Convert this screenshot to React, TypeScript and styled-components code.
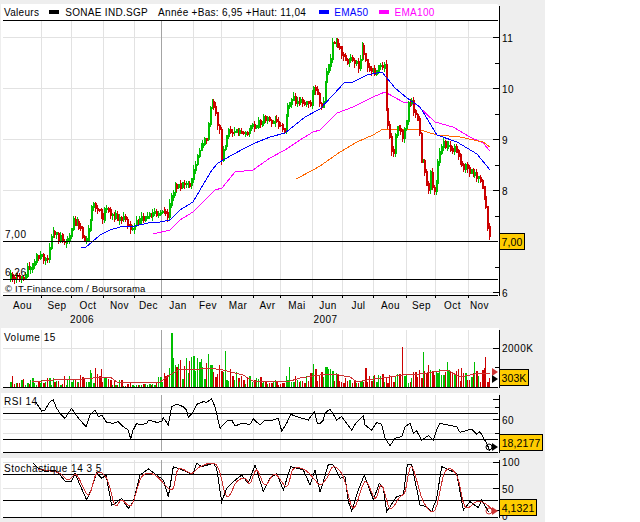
import React from "react";
import styled, { createGlobalStyle } from "styled-components";

type Pt = [number, number];

const GlobalStyle = createGlobalStyle`
  html, body { margin: 0; padding: 0; background: #fff; }
`;

const GREEN = "#00BE00";
const RED = "#CC0000";
const FONT = `"Liberation Sans", Arial, sans-serif`;

const Page = styled.div`
  width: 640px;
  height: 522px;
  background: #fff;
  overflow: hidden;
  font-family: ${FONT};
  font-size: 10px;
  color: #000;
`;
const ChartColumn = styled.div`
  width: 544px;
  height: 518px;
  padding: 4px 0 0 1px;
  background: #eee;
  display: flex;
  flex-direction: column;
`;
const PanelRow = styled.div<{ $h: number; $gap?: number }>`
  display: flex;
  height: ${(p) => p.$h}px;
  margin-bottom: ${(p) => p.$gap ?? 0}px;
  flex: none;
`;
const Plot = styled.div<{ $rounded?: boolean }>`
  width: 498px;
  background: #fff;
  display: flex;
  flex-direction: column;
  border-top-right-radius: ${(p) => (p.$rounded ? 3 : 0)}px;
`;
const Legend = styled.div`
  height: 16px;
  margin-left: 2px;
  width: 494px;
  padding-left: 1px;
  display: flex;
  align-items: center;
  border-bottom: 1px solid #000;
  flex: none;
`;
const LegendText = styled.span<{ $color?: string; $left?: number }>`
  color: ${(p) => p.$color ?? "#000"};
  margin-left: ${(p) => p.$left ?? 0}px;
  font-size: 10px;
  letter-spacing: 0.3px;
  white-space: pre;
`;
const Swatch = styled.i<{ $color: string; $left: number }>`
  display: block;
  width: 10px;
  height: 4px;
  background: ${(p) => p.$color};
  margin-left: ${(p) => p.$left}px;
`;
const PlotSvg = styled.svg`
  display: block;
  flex: none;
  overflow: visible;
`;
const AxisColumn = styled.div`
  position: relative;
  width: 45px;
  flex: none;
`;
const AxisSvg = styled.svg`
  display: block;
  overflow: visible;
`;
const Badge = styled.div<{ $top: number; $width: number; $height: number }>`
  position: absolute;
  left: 0;
  top: ${(p) => p.$top}px;
  width: ${(p) => p.$width}px;
  height: ${(p) => p.$height}px;
  box-sizing: border-box;
  background: #ffcc00;
  border: 1px solid #000;
  display: flex;
  align-items: center;
  justify-content: center;
  font-size: 10.5px;
  letter-spacing: 0.1px;
  white-space: nowrap;
`;
const TimeAxis = styled.div`
  height: 32px;
  flex: none;
  padding-left: 2px;
`;
const TimeRow = styled.div<{ $h: number }>`
  display: flex;
  height: ${(p) => p.$h}px;
  align-items: center;
`;
const TimeCell = styled.span<{ $w: number }>`
  width: ${(p) => p.$w}px;
  flex: none;
  text-align: center;
  letter-spacing: 0.4px;
`;
const ChartLabel = styled.text<{ $tight?: boolean }>`
  font-family: ${FONT};
  font-size: ${(p) => (p.$tight ? 9.5 : 10)}px;
  letter-spacing: ${(p) => (p.$tight ? 0.2 : 0.5)}px;
  fill: #000;
`;

function lerp(p: Pt[], x: number) {
  if (x <= p[0][0]) return p[0][1];
  for (let i = 1; i < p.length; i++) {
    if (x <= p[i][0]) {
      const [a, b] = p[i - 1];
      const [c, d] = p[i];
      return b + ((d - b) * (x - a)) / (c - a || 1);
    }
  }
  return p[p.length - 1][1];
}
function rng(seed: number) {
  let s = seed;
  return () => {
    s = (s * 16807) % 2147483647;
    return (s - 1) / 2147483646;
  };
}
function smooth(p: Pt[], n = 4): Pt[] {
  const out: Pt[] = [];
  for (let i = 0; i < p.length - 1; i++) {
    const a = p[Math.max(i - 1, 0)];
    const b = p[i];
    const c = p[i + 1];
    const d = p[Math.min(i + 2, p.length - 1)];
    for (let k = 0; k < n; k++) {
      const t = k / n;
      const f = (u: number) =>
        0.5 *
        (2 * b[u] +
          (c[u] - a[u]) * t +
          (2 * a[u] - 5 * b[u] + 4 * c[u] - d[u]) * t * t +
          (3 * b[u] - a[u] - 3 * c[u] + d[u]) * t * t * t);
      out.push([f(0), f(1)]);
    }
  }
  out.push(p[p.length - 1]);
  return out;
}
const str = (p: Pt[]) => p.map(([x, y]) => `${x},${y}`).join(" ");
const z = (list: Pt[], xo: number, yo: number): Pt[] => list.map(([x, y]) => [xo + x / 3, yo + y / 3]);

const VGRID = [41.5, 71.5, 103.5, 134.5, 193.5, 221.5, 253.5, 280.5, 312.5, 342.5, 373.5, 406.5, 435.5, 468.5];
const TICKS = [...VGRID, 161.5];
const MONTHS: [string, number][] = [
  ["Aou", 39], ["Sep", 30], ["Oct", 32], ["Nov", 31], ["Dec", 27], ["Jan", 32], ["Fev", 28], ["Mar", 32],
  ["Avr", 27], ["Mai", 32], ["Jun", 30], ["Jul", 31], ["Aou", 33], ["Sep", 29], ["Oct", 33], ["Nov", 21],
];

const CLOSE: Pt[] = [
  [10, 277], [24, 278], [26, 267], [33, 265], [36, 256], [47, 258], [49, 247], [52, 233], [62, 240], [66, 240],
  [70, 235], [72, 220], [78, 224], [83, 238], [87, 236], [90, 213], [93, 203], [100, 212], [102, 217], [105, 207],
  [110, 214], [120, 218], [125, 220], [130, 228], [135, 222], [140, 220], [148, 214], [160, 214], [163, 212],
  [168, 216], [170, 198], [175, 184], [185, 184], [190, 188], [193, 170], [195, 163], [200, 148], [207, 135],
  [210, 108], [212, 102], [215, 115], [219, 130], [221, 160], [224, 145], [228, 130], [235, 128], [245, 133],
  [255, 125], [262, 120], [270, 120], [275, 120], [283, 132], [288, 100], [296, 100], [303, 102], [310, 105],
  [314, 82], [318, 100], [322, 105], [325, 75], [330, 60], [332, 42], [336, 40], [340, 50], [345, 62], [350, 55],
  [354, 60], [358, 68], [362, 45], [365, 60], [370, 68], [374, 74], [379, 62], [384, 68], [385, 90], [385.5, 108],
  [388, 130], [390, 136], [392, 158], [395, 135], [397, 128], [402, 135], [405, 125], [407, 110], [408, 100],
  [411, 100], [414, 110], [418, 120], [419, 135], [420, 168], [422, 155], [424, 165], [427, 193], [430, 175],
  [433, 197], [435, 185], [437, 165], [438, 155], [440, 146], [443, 143], [450, 150], [455, 148], [458, 160],
  [462, 165], [470, 170], [475, 175], [478, 175], [482, 188], [484, 200], [486, 213], [488, 230], [490, 242],
];
const EMA50: Pt[] = [
  [81, 248], [86, 247], [92, 242], [100, 235], [110, 230], [120, 227], [135, 226], [148, 223], [160, 222], [170, 220],
  [180, 210], [193, 202], [200, 190], [212, 170], [218, 163], [232, 155], [245, 148], [255, 143], [270, 137],
  [285, 133], [295, 125], [305, 117], [318, 110], [320, 109], [333, 95], [345, 82], [353, 82], [367, 75], [382, 72],
  [395, 88], [407, 98], [420, 107], [437, 135], [457, 142], [477, 154], [490, 170],
];
const EMA100: Pt[] = [
  [153, 234], [170, 230], [180, 220], [193, 212], [205, 200], [215, 190], [222, 188], [235, 172], [253, 170],
  [270, 158], [285, 150], [300, 140], [313, 132], [320, 130], [337, 113], [353, 107], [373, 97], [385, 92],
  [403, 102], [417, 105], [435, 122], [453, 127], [470, 137], [483, 143], [490, 151],
];
const ORANGE: Pt[] = [
  [296, 179], [313, 170], [320, 166], [340, 152], [357, 142], [373, 135], [383, 129], [417, 129], [437, 135],
  [460, 137], [483, 142], [490, 147],
];
const VOL_MA: Pt[] = [
  [32, 382], [53, 380], [83, 379], [103, 377], [110, 377], [117, 382], [147, 382], [160, 382], [170, 375], [180, 369],
  [193, 370], [208, 368], [223, 370], [243, 375], [253, 381], [287, 382], [300, 378], [320, 375], [333, 374], [350, 377],
  [357, 382], [367, 380], [382, 378], [403, 375], [420, 374], [447, 370], [460, 377], [480, 373], [490, 373],
];
const RSI: Pt[] = [
  ...z([[108, 232], [125, 258], [135, 255], [150, 230], [160, 225], [170, 250], [180, 265], [195, 280], [215, 250], [225, 265], [240, 285], [258, 305], [270, 270], [285, 255], [295, 275], [305, 270], [320, 292], [340, 295], [355, 290], [370, 305], [385, 315], [392, 342], [398, 318], [410, 295], [420, 300], [440, 295], [445, 285], [470, 292], [485, 290], [490, 278], [505, 300], [515, 245], [530, 238], [550, 245], [560, 255], [565, 278], [578, 262], [590, 238], [610, 230], [620, 232], [635, 222], [645, 245], [660, 310], [680, 288], [695, 285], [705, 303], [725, 295], [750, 298], [760, 282], [780, 300], [795, 285], [820, 285], [835, 280], [845, 318], [860, 295], [872, 268], [900, 278], [925, 285], [943, 260], [952, 295]], 0, 325),
  ...z([[0, 295], [10, 285], [15, 265], [30, 252], [50, 285], [65, 275], [95, 315], [105, 298], [130, 272], [135, 300], [155, 315], [170, 293], [185, 298], [195, 340], [210, 362], [225, 340], [245, 335], [255, 305], [270, 295], [280, 325], [290, 318], [305, 345], [325, 332], [340, 345], [350, 315], [360, 295], [410, 305], [420, 322], [455, 312], [470, 328], [480, 320], [500, 355], [510, 378]], 320, 325),
];
const STO_K: Pt[] = [
  ...z([[100, 415], [115, 430], [135, 440], [165, 435], [180, 450], [197, 470], [215, 468], [225, 445], [240, 480], [260, 525], [275, 490], [290, 445], [305, 460], [318, 450], [335, 540], [345, 535], [365, 520], [385, 550], [400, 530], [420, 450], [445, 432], [470, 450], [490, 465], [505, 515], [520, 425], [535, 430], [560, 440], [578, 450], [590, 415], [605, 425], [640, 415], [650, 430], [665, 530], [680, 490], [700, 470], [725, 450], [745, 475], [765, 420], [790, 500], [810, 460], [830, 445], [850, 495], [872, 425], [910, 435], [930, 480], [945, 435]], 0, 325),
  ...z([[0, 500], [10, 470], [25, 418], [40, 420], [60, 460], [75, 455], [85, 530], [95, 558], [115, 495], [133, 450], [160, 525], [178, 475], [190, 490], [200, 560], [230, 515], [250, 510], [262, 420], [275, 418], [300, 540], [320, 545], [335, 560], [350, 520], [365, 425], [410, 445], [430, 555], [450, 530], [475, 548], [485, 525], [505, 560]], 320, 325),
];
const STO_D: Pt[] = smooth([
  ...z([[115, 432], [150, 438], [180, 445], [205, 465], [230, 450], [265, 510], [290, 445], [320, 460], [345, 540], [365, 525], [395, 540], [425, 455], [465, 450], [515, 495], [535, 432], [575, 445], [600, 425], [650, 420], [680, 515], [710, 470], [735, 460], [750, 475], [770, 435], [795, 480], [825, 447], [860, 485], [880, 432], [915, 435], [945, 465]], 0, 325),
  ...z([[0, 480], [20, 460], [40, 425], [70, 455], [100, 550], [135, 470], [165, 520], [185, 480], [210, 550], [240, 515], [255, 500], [275, 425], [310, 530], [345, 555], [375, 440], [410, 450], [435, 545], [470, 530], [495, 535], [520, 558]], 320, 325),
], 5);

type Bar = { x: number; hi: number; lo: number; top: number; bottom: number; up: boolean; vol: number; wide: boolean };
const VOL_BASE: Pt[] = [
  [10, 5], [60, 6], [80, 9], [100, 11], [110, 5], [135, 3], [150, 4], [165, 9], [175, 18], [190, 18], [215, 16], [225, 13],
  [240, 7], [275, 5], [300, 8], [320, 13], [340, 8], [355, 5], [400, 10], [480, 12], [490, 12],
];
const VOL_PEAKS: Pt[] = [
  [11, 11], [90, 17], [95, 19], [100, 18], [171, 54], [173, 29], [175, 22], [194, 31], [197, 29], [200, 28], [208, 33], [224, 36],
  [289, 20], [313, 23], [326, 20], [330, 18], [366, 19], [403, 40], [423, 35], [429, 22], [447, 25], [462, 19], [475, 25], [486, 30],
];
const BARS: Bar[] = (() => {
  const r = rng(4711);
  const out: Bar[] = [];
  let prev = CLOSE[0][1];
  let i = 0;
  for (let x = 10; x <= 490; x += 1.85) {
    const close = lerp(CLOSE, x) + (r() - 0.5) * 7;
    const up = close < prev;
    const top = Math.min(close, prev) - r();
    const bottom = Math.max(close, prev) + 1 + r();
    const hi = top - r() * 4;
    const lo = bottom + r() * 4;
    let vol = lerp(VOL_BASE, x) * (0.3 + r() * 1.4);
    const peak = VOL_PEAKS.find(([px]) => Math.abs(px - x) < 0.93);
    if (peak) vol = peak[1];
    out.push({ x: Math.round(x), hi, lo, top, bottom, up, vol, wide: i % 3 === 0 });
    prev = close;
    i++;
  }
  return out;
})();

const HLine = ({ y, x1 = 3, x2 = 498, color = "#000" }: { y: number; x1?: number; x2?: number; color?: string }) => (
  <line x1={x1} x2={x2} y1={y} y2={y} stroke={color} shapeRendering="crispEdges" />
);
const Series = ({ points, color }: { points: Pt[]; color: string }) => (
  <polyline points={str(points)} fill="none" stroke={color} shapeRendering="crispEdges" />
);
const Grid = ({ top, bottom, rows }: { top: number; bottom: number; rows: number[] }) => (
  <>
    {rows.map((y) => (
      <HLine key={y} y={y} color="#e2e2e2" />
    ))}
    {VGRID.map((x) => (
      <line key={x} x1={x} x2={x} y1={top} y2={bottom} stroke="#e2e2e2" shapeRendering="crispEdges" />
    ))}
    <line x1={161.5} x2={161.5} y1={top} y2={bottom} stroke="#a4a4a4" shapeRendering="crispEdges" />
  </>
);
const YTicks = ({ major, minor }: { major: number[]; minor: number[] }) => (
  <>
    {major.map((y) => (
      <HLine key={y} y={y} x1={493} x2={499} />
    ))}
    {minor.map((y) => (
      <HLine key={y} y={y} x1={495} x2={499} />
    ))}
  </>
);
const Arrow = ({ y, color }: { y: number; color: string }) => (
  <polygon points={`${492},${y - 4} ${498},${y} ${492},${y + 4}`} fill={color} />
);
const Ring = ({ y, color }: { y: number; color: string }) => (
  <circle cx={489} cy={y} r={3} fill="none" stroke={color} />
);

function PlotArea({ top, bottom, children }: { top: number; bottom: number; children: React.ReactNode }) {
  return (
    <PlotSvg width={498} height={bottom - top} viewBox={`1 ${top} 498 ${bottom - top}`}>
      {children}
    </PlotSvg>
  );
}
function Axis({ top, bottom, lineFrom, labels }: { top: number; bottom: number; lineFrom: number; labels: [string, number][] }) {
  return (
    <AxisSvg width={45} height={bottom - top} viewBox={`499 ${top} 45 ${bottom - top}`}>
      <line x1={499.5} x2={499.5} y1={lineFrom} y2={bottom} stroke="#000" shapeRendering="crispEdges" />
      {labels.map(([t, y]) => (
        <ChartLabel key={t} x={502} y={y}>
          {t}
        </ChartLabel>
      ))}
    </AxisSvg>
  );
}

export default function App() {
  return (
    <Page>
      <GlobalStyle />
      <ChartColumn>
        <PanelRow $h={292}>
          <Plot $rounded>
            <Legend>
              <LegendText>Valeurs</LegendText>
              <Swatch $color="#000" $left={10} />
              <LegendText $left={6}>SONAE IND.SGP</LegendText>
              <LegendText $left={10}>Année +Bas: 6,95 +Haut: 11,04</LegendText>
              <Swatch $color="#0000ff" $left={13} />
              <LegendText $color="#0000ff" $left={5}>EMA50</LegendText>
              <Swatch $color="#ff00ff" $left={11} />
              <LegendText $color="#ff00ff" $left={5}>EMA100</LegendText>
            </Legend>
            <PlotArea top={21} bottom={296}>
              <Grid top={21} bottom={295} rows={[37.5, 88.5, 139.5, 190.5, 292.5]} />
              <Series points={EMA100} color="#ff00ff" />
              <Series points={ORANGE} color="#ff6600" />
              {BARS.map((b, i) => (
                <g key={i} fill={b.up ? GREEN : RED} shapeRendering="crispEdges">
                  <rect x={b.x} y={b.hi} width={1} height={b.lo - b.hi} />
                  <rect x={b.x} y={b.top} width={2} height={b.bottom - b.top} />
                </g>
              ))}
              <Series points={EMA50} color="#0000ff" />
              <HLine y={241.5} />
              <HLine y={279.5} />
              <HLine y={295.5} />
              {TICKS.map((x) => (
                <line key={x} x1={x} x2={x} y1={295} y2={298} stroke="#000" shapeRendering="crispEdges" />
              ))}
              <YTicks major={[37.5, 88.5, 139.5, 190.5, 292.5]} minor={[63.5, 114.5, 165.5, 216.5, 267.5]} />
              <ChartLabel x={5} y={238}>7,00</ChartLabel>
              <ChartLabel x={5} y={276}>6,26</ChartLabel>
              <ChartLabel $tight x={5} y={292}>© IT-Finance.com / Boursorama</ChartLabel>
            </PlotArea>
          </Plot>
          <AxisColumn>
            <Axis
              top={4}
              bottom={296}
              lineFrom={6}
              labels={[["11", 42], ["10", 93], ["9", 144], ["8", 195], ["6", 297]]}
            />
            <Badge $top={229} $width={26} $height={17}>7,00</Badge>
          </AxisColumn>
        </PanelRow>

        <TimeAxis>
          <TimeRow $h={19}>
            {MONTHS.map(([m, w], i) => (
              <TimeCell key={i} $w={w}>{m}</TimeCell>
            ))}
          </TimeRow>
          <TimeRow $h={9}>
            <TimeCell $w={158}>2006</TimeCell>
            <TimeCell $w={329}>2007</TimeCell>
          </TimeRow>
        </TimeAxis>

        <PanelRow $h={60} $gap={5}>
          <Plot>
            <PlotArea top={328} bottom={388}>
              <Grid top={330} bottom={387} rows={[348.5]} />
              {BARS.map((b, i) => (
                <rect
                  key={i}
                  x={b.x}
                  y={387 - b.vol}
                  width={b.wide ? 2 : 1}
                  height={b.vol}
                  fill={b.up ? GREEN : RED}
                  shapeRendering="crispEdges"
                />
              ))}
              <Series points={VOL_MA} color="#cc3333" />
              <HLine y={387.5} />
              <YTicks major={[348.5]} minor={[367.5]} />
              <Arrow y={372} color="#cc3333" />
              <Arrow y={379} color="#000" />
              <ChartLabel x={4} y={341}>Volume 15</ChartLabel>
            </PlotArea>
          </Plot>
          <AxisColumn>
            <Axis top={328} bottom={388} lineFrom={330} labels={[["2000K", 352]]} />
            <Badge $top={41} $width={30} $height={17}>303K</Badge>
          </AxisColumn>
        </PanelRow>

        <PanelRow $h={60} $gap={5}>
          <Plot>
            <PlotArea top={393} bottom={453}>
              <Grid top={395} bottom={451} rows={[407.5, 419.5, 433.5]} />
              <HLine y={413.5} />
              <HLine y={439.5} />
              <Series points={RSI} color="#000" />
              <HLine y={452.5} />
              <YTicks major={[399.5, 419.5]} minor={[407.5, 433.5]} />
              <Ring y={447} color="#000" />
              <Arrow y={447} color="#000" />
              <ChartLabel x={4} y={405}>RSI 14</ChartLabel>
            </PlotArea>
          </Plot>
          <AxisColumn>
            <Axis top={393} bottom={453} lineFrom={395} labels={[["60", 424]]} />
            <Badge $top={41} $width={44} $height={17}>18,2177</Badge>
          </AxisColumn>
        </PanelRow>

        <PanelRow $h={60}>
          <Plot>
            <PlotArea top={458} bottom={518}>
              <Grid top={460} bottom={517} rows={[462.5, 488.5]} />
              <HLine y={474.5} />
              <HLine y={500.5} />
              <Series points={STO_K} color="#000" />
              <Series points={STO_D} color="#cc3333" />
              <HLine y={517.5} />
              <YTicks major={[462.5, 488.5]} minor={[510.5]} />
              <Ring y={511} color="#cc3333" />
              <Arrow y={511} color="#cc3333" />
              <ChartLabel x={4} y={472}>Stochastique 14 3 5</ChartLabel>
            </PlotArea>
          </Plot>
          <AxisColumn>
            <Axis top={458} bottom={518} lineFrom={460} labels={[["100", 466], ["50", 493], ["0", 520]]} />
            <Badge $top={41} $width={38} $height={17}>4,1321</Badge>
          </AxisColumn>
        </PanelRow>
      </ChartColumn>
    </Page>
  );
}
